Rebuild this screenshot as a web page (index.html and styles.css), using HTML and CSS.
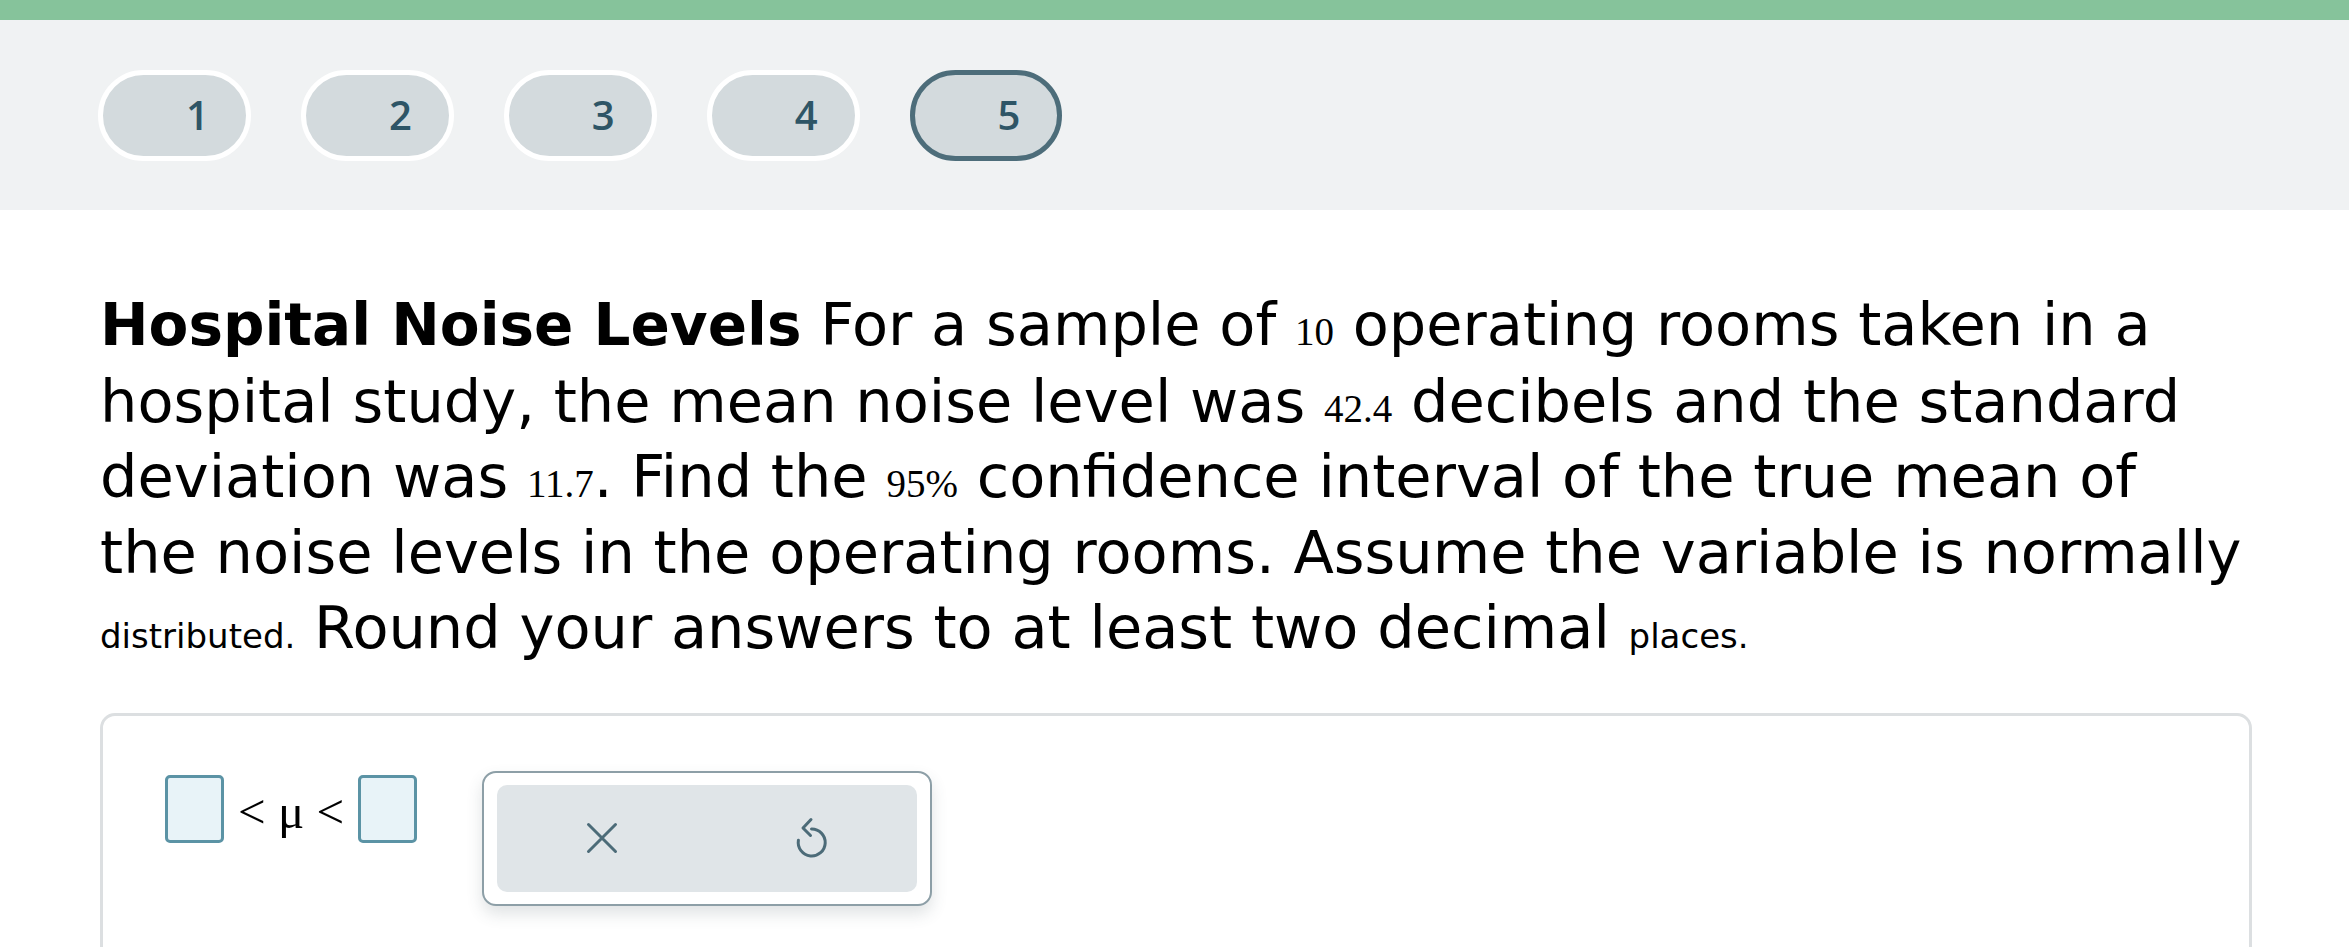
FILE: index.html
```html
<!DOCTYPE html>
<html lang="en">
<head>
<meta charset="utf-8">
<title>Hospital Noise Levels</title>
<link rel="stylesheet" href="styles.css">
</head>
<body>
<div class="topbar"></div>
<header class="steps">
  <div class="pill">1</div>
  <div class="pill">2</div>
  <div class="pill">3</div>
  <div class="pill">4</div>
  <div class="pill active">5</div>
</header>
<main class="content">
  <p class="question"><b>Hospital Noise Levels</b> For a sample of <span class="num">10</span> operating rooms taken in a hospital study, the mean noise level was <span class="num">42.4</span> decibels and the standard deviation was <span class="num">11.7</span>. Find the <span class="num">95%</span> confidence interval of the true mean of the noise levels in the operating rooms. Assume the variable is normally <span class="small">distributed.</span> Round your answers to at least two decimal <span class="small">places.</span></p>
  <section class="answer">
    <div class="math">
      <span class="box"></span>
      <span class="rel">&lt;&nbsp;μ&nbsp;&lt;</span>
      <span class="box"></span>
    </div>
    <div class="tools">
      <div class="tools-inner">
        <button class="tool" aria-label="Clear">
          <svg width="32" height="32" viewBox="0 0 32 32"><path d="M2.5 2.5 L29.5 29.5 M29.5 2.5 L2.5 29.5" fill="none" stroke="#4c6b78" stroke-width="3" stroke-linecap="round"/></svg>
        </button>
        <button class="tool" aria-label="Undo">
          <svg width="34" height="42" viewBox="0 0 34 42"><path d="M16.5 12 A13.5 13.5 0 1 1 3.4 23.3" fill="none" stroke="#4c6b78" stroke-width="3" stroke-linecap="round"/><path d="M16 2.5 L8 11 L15.5 18.5" fill="none" stroke="#4c6b78" stroke-width="3" stroke-linecap="round" stroke-linejoin="round"/></svg>
        </button>
      </div>
    </div>
  </section>
</main>
</body>
</html>
```

FILE: styles.css
```css
* { box-sizing: border-box; }
html, body { margin: 0; padding: 0; background: #ffffff; }
body { font-family: "DejaVu Sans", Verdana, sans-serif; color: #000; }

.topbar { height: 20px; background: #86c39b; }

.steps {
  display: flex;
  gap: 50px;
  align-items: center;
  height: 190px;
  padding-left: 98px;
  background: #f0f2f3;
}
.pill {
  display: flex;
  align-items: center;
  height: 91px;
  padding: 0 37px 0 83px;
  border: 5px solid #ffffff;
  border-radius: 999px;
  background: #d3dadd;
  color: #2e5566;
  font-family: "Open Sans", "Liberation Sans", sans-serif;
  font-weight: 600;
  font-size: 40px;
  line-height: 1;
}
.pill.active { border-color: #4d6d7a; }

.content { padding: 77px 97px 0 100px; }
.question {
  margin: 0 8px 0 0;
  font-size: 59px;
  line-height: 75.5px;
}
.question b { font-weight: bold; font-size: 58px; }
.num {
  font-family: "Liberation Serif", "Times New Roman", serif;
  font-size: 39px;
  line-height: 1;
}
.small { font-size: 34px; line-height: 1; }

.answer {
  margin-top: 47px;
  height: 320px;
  border: 3px solid #dcdfe1;
  border-radius: 15px;
  padding: 55px 62px;
  display: flex;
  align-items: flex-start;
  gap: 65px;
}
.math {
  display: flex;
  align-items: center;
  gap: 14px;
  margin-top: 4px;
}
.box {
  width: 59px;
  height: 68px;
  border: 3px solid #5b93a5;
  border-radius: 5px;
  background: #e8f3f8;
}
.rel {
  font-family: "Liberation Serif", "Times New Roman", serif;
  font-size: 49px;
  line-height: 1;
  padding-top: 6px;
}
.tools {
  border: 2px solid #8d9fa7;
  border-radius: 14px;
  background: #fff;
  padding: 12px 13px;
  box-shadow: 0 8px 16px rgba(60, 80, 90, 0.16);
}
.tools-inner {
  display: grid;
  grid-template-columns: 1fr 1fr;
  width: 420px;
  height: 107px;
  border-radius: 10px;
  background: #e0e5e8;
  align-items: center;
  justify-items: center;
}
.tool {
  background: none;
  border: 0;
  padding: 0;
  display: flex;
  cursor: pointer;
}
```
